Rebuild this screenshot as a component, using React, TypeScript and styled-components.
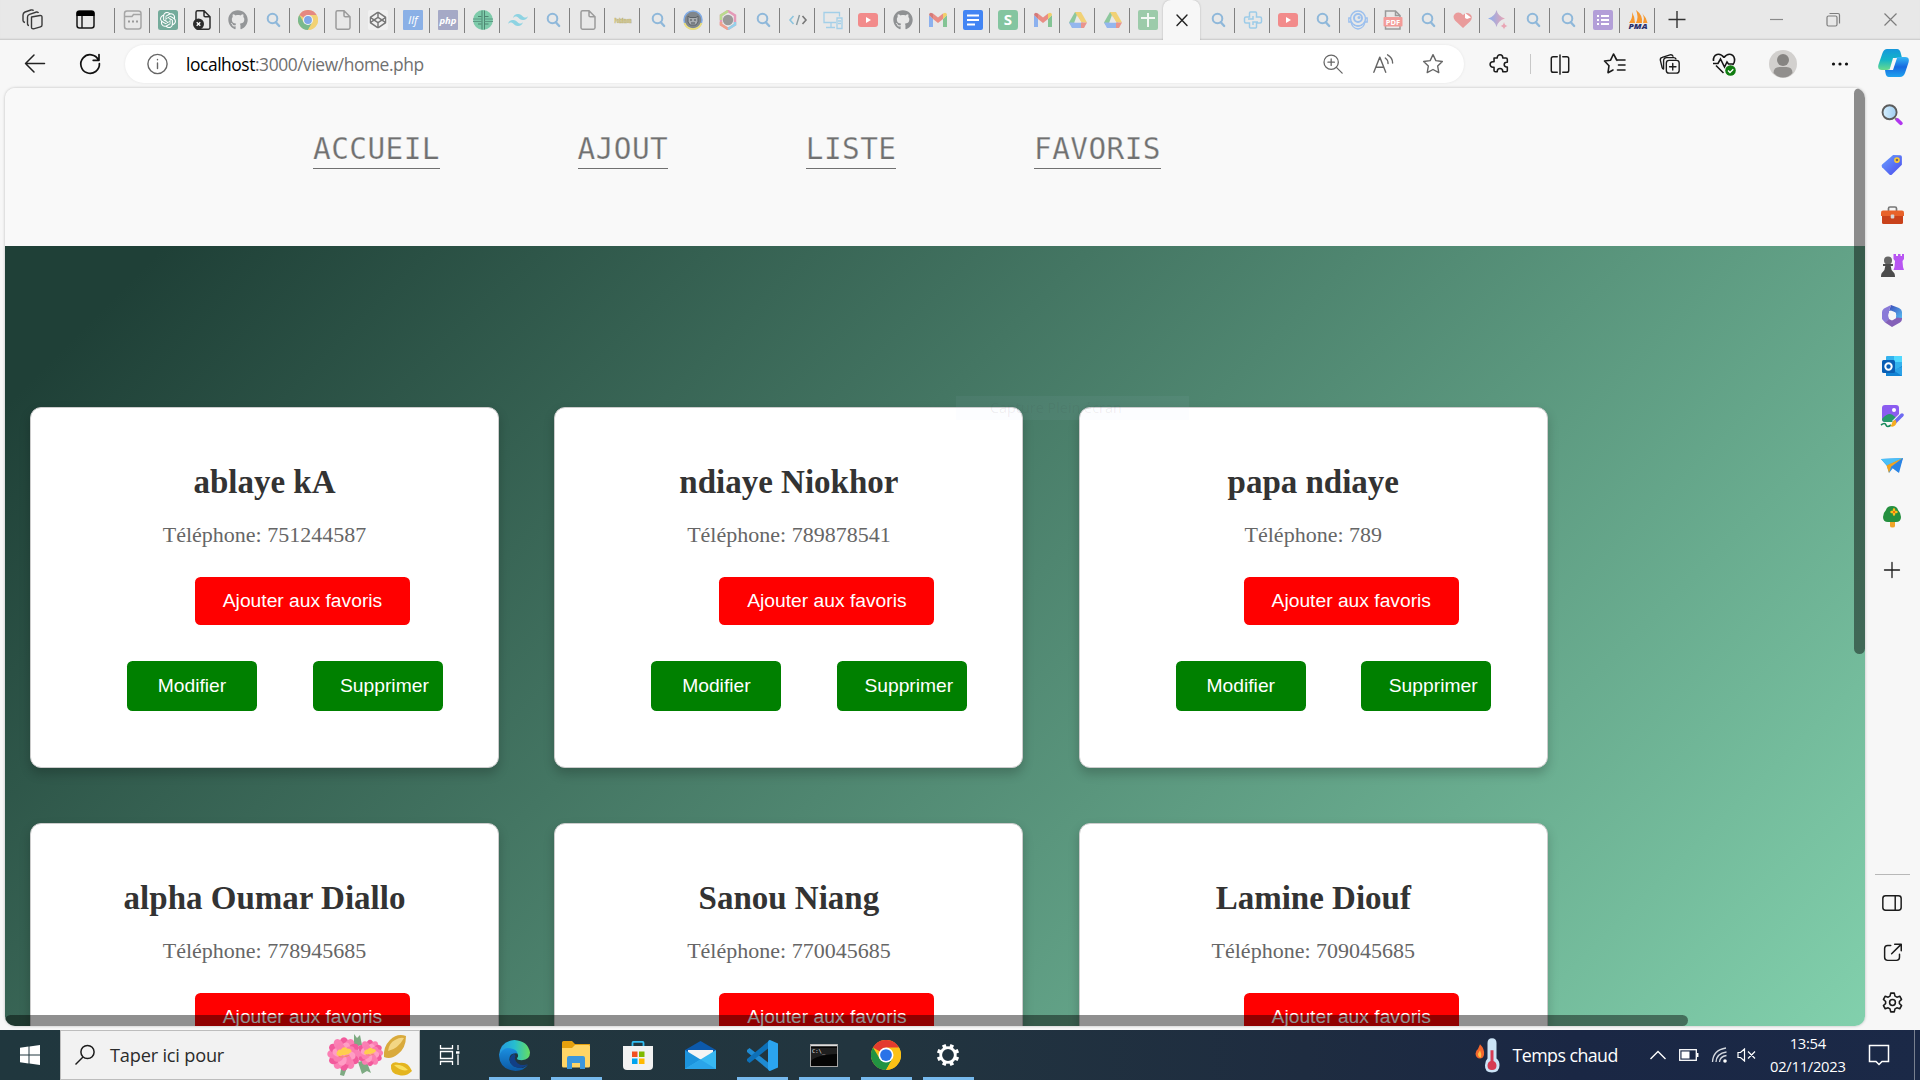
import React from "react";
import styled, { createGlobalStyle } from "styled-components";
import { FaGithub, FaCodepen } from "react-icons/fa";
import { SiOpenai, SiTailwindcss } from "react-icons/si";

const UI_FONT = '"Open Sans", "Noto Sans", sans-serif';

const Global = createGlobalStyle`
  *, *::before, *::after { box-sizing: border-box; }
  html, body { margin: 0; padding: 0; overflow: hidden; }
  body { background: #f7f7f7; font-family: ${UI_FONT}; }
`;

/* ---------- window shell ---------- */

const Screen = styled.div`
  display: flex;
  flex-direction: column;
  width: 1920px;
  height: 1080px;
  overflow: hidden;
  background: #f7f7f7;
`;

const TabStrip = styled.header`
  display: flex;
  flex: none;
  height: 40px;
  background: #e8e8e8;
  box-shadow: inset 0 -1px 0 #cfcfcf, inset 0 -2px 1px #dedede;
`;

const StripTools = styled.div`
  display: flex;
  width: 114px;
  padding: 9px 0 0 22px;
  gap: 32px;
  svg { display: block; flex: none; }
`;

const TabItem = styled.div<{ $sep: boolean }>`
  display: flex;
  flex: none;
  width: 35px;
  height: 40px;
  padding: 10px 0 0 9px;
  background: linear-gradient(#808080, #808080) 0 8px / ${(p) => (p.$sep ? "1px" : "0")} 25px no-repeat;
  svg { display: block; }
`;

const ActiveTab = styled.div`
  display: flex;
  flex: none;
  align-items: center;
  justify-content: center;
  width: 37px;
  margin: 0 -1px;
  height: 40px;
  background: #f7f7f7;
  border-radius: 8px 8px 0 0;
  box-shadow: 0 0 2px rgba(0, 0, 0, 0.25);
  clip-path: inset(0 -3px 0 -3px);
`;

const NewTab = styled.div`
  display: flex;
  width: 100px;
  padding: 10px 0 0 13px;
  background: linear-gradient(#808080, #808080) 0 8px / 1px 25px no-repeat;
`;

const WindowControls = styled.div`
  display: flex;
  gap: 37px;
  padding: 9px 0 0 12px;
  svg { display: block; }
`;

const Toolbar = styled.div`
  display: flex;
  flex: none;
  align-items: center;
  height: 48px;
  padding-left: 23px;
`;

const NavButtons = styled.div`
  display: flex;
  width: 102px;
  gap: 31px;
`;

const AddressBar = styled.div`
  display: flex;
  align-items: center;
  width: 1339px;
  height: 38px;
  padding: 0 20px 1px 20px;
  border-radius: 19px;
  background: #fff;
  box-shadow: 0 0 3px rgba(0, 0, 0, 0.08);
`;

const Url = styled.div`
  margin-left: 17px;
  flex: 1;
  font-size: 17.4px;
  line-height: 24px;
  letter-spacing: -0.43px;
  color: #707070;
  white-space: nowrap;
  b { font-weight: 400; color: #000; }
`;

const AddressActions = styled.div`
  display: flex;
  gap: 28px;
`;

const ToolbarActions = styled.div`
  display: flex;
  align-items: center;
  margin-left: 25px;
`;

const Slot = styled.div<{ $w: number }>`
  display: flex;
  justify-content: center;
  width: ${(p) => p.$w}px;
`;

const CopilotSlot = styled(Slot)`
  padding-top: 2px;
`;

const ToolDivider = styled.div`
  width: 1px;
  height: 20px;
  background: #c8c8c8;
`;

/* ---------- body ---------- */

const Middle = styled.div`
  display: flex;
  flex: none;
  height: 942px;
`;

const Viewport = styled.main`
  position: relative;
  flex: none;
  width: 1860px;
  height: 938px;
  margin-left: 5px;
  border-radius: 10px;
  overflow: hidden;
  background: #f9f9f9;
  box-shadow: 0 0 3px rgba(0, 0, 0, 0.25);
`;

const SiteNav = styled.nav`
  display: flex;
  gap: 137.5px;
  height: 158px;
  padding: 45px 0 0 308px;
  background: #f9f9f9;
`;

const NavLink = styled.a`
  display: block;
  height: 36px;
  border-bottom: 1.4px solid #707070;
  font-family: "DejaVu Sans Mono", monospace;
  font-size: 29.4px;
  line-height: 33px;
  letter-spacing: 0.45px;
  color: #707070;
  -webkit-text-stroke: 0.25px #f9f9f9;
`;

const Content = styled.section`
  display: grid;
  grid-template-columns: repeat(3, 469px);
  grid-auto-rows: 361px;
  gap: 55px 55.4px;
  height: 780px;
  padding: 161px 0 0 25px;
  background: linear-gradient(135deg, #1f4037 112px, #99f2c8 2278px);
  overflow: hidden;
`;

const Card = styled.article`
  display: flex;
  flex-direction: column;
  padding-top: 54.5px;
  border: 1.4px solid #ccc;
  border-radius: 11px;
  background: #fff;
  box-shadow: 0 5.5px 11px rgba(0, 0, 0, 0.2);
  text-align: center;
  font-family: "Liberation Serif", serif;
`;

const Name = styled.h2`
  margin: 0 0 21px;
  font-size: 33px;
  line-height: 38px;
  color: #333;
`;

const Phone = styled.p`
  margin: 0 0 30px;
  font-size: 22px;
  line-height: 25px;
  color: #666;
`;

const CardButton = styled.button<{ $kind: "fav" | "act"; $clip?: boolean }>`
  flex: none;
  width: ${(p) => (p.$kind === "fav" ? 215 : 130)}px;
  height: ${(p) => (p.$kind === "fav" ? 48 : 50)}px;
  margin: 0;
  padding: ${(p) => (p.$kind === "fav" ? "1px" : "0")} 0 0 ${(p) => (p.$clip ? "27.5px" : "0")};
  border: 0;
  border-radius: 5.5px;
  background: ${(p) => (p.$kind === "fav" ? "#f00" : "#008000")};
  color: #fff;
  font-family: "Liberation Sans", Arial, sans-serif;
  font-size: 19.25px;
  text-align: ${(p) => (p.$clip ? "left" : "center")};
  white-space: nowrap;
`;

const FavRow = styled.div`
  display: flex;
  padding-left: 164px;
  margin-bottom: 36px;
`;

const ActRow = styled.div`
  display: flex;
  gap: 55.5px;
  padding-left: 96px;
`;

const Scroll = styled.div<{ $dir: "v" | "h" }>`
  position: absolute;
  background: rgba(0, 0, 0, 0.44);
  ${(p) =>
    p.$dir === "v"
      ? "right: 0; top: 0; width: 11px; height: 566px; border-radius: 6px;"
      : "left: 0; bottom: 0; width: 1683px; height: 11px; border-radius: 6px;"}
`;

const GhostTip = styled.div`
  position: absolute;
  left: 951px;
  top: 308px;
  width: 233px;
  height: 24px;
  padding-left: 34px;
  background: rgba(190, 215, 255, 0.05);
  color: rgba(60, 60, 60, 0.08);
  font-size: 14.4px;
  line-height: 24px;
`;

const SideBar = styled.aside`
  display: flex;
  flex-direction: column;
  align-items: center;
  width: 54px;
  padding-top: 1.5px;
`;

const SideItem = styled.div<{ $h?: number }>`
  display: flex;
  flex: none;
  align-items: center;
  justify-content: center;
  width: 54px;
  height: ${(p) => p.$h ?? 50.2}px;
`;

const SideSpacer = styled.div`
  flex: 1;
`;

const SideRule = styled.div`
  width: 35px;
  height: 1px;
  margin-bottom: 3px;
  background: #b8b8b8;
`;

const SideFoot = styled.div`
  padding-bottom: 2.5px;
`;

/* ---------- taskbar ---------- */

const TaskBar = styled.footer`
  display: flex;
  flex: none;
  height: 50px;
  background: linear-gradient(90deg, #20373e 0, #22353f 45%, #1e2c40 68%, #1a2744 82%, #1b2947 100%);
  color: #fff;
`;

const StartButton = styled.div`
  display: flex;
  align-items: center;
  justify-content: center;
  width: 60px;
`;

const SearchBox = styled.div`
  display: flex;
  align-items: center;
  width: 360px;
  padding-left: 13px;
  padding-right: 5px;
  background: #f2f2f2;
  border: 1px solid #bdbdbd;
  color: #2b2b2b;
  font-size: 18.2px;
  letter-spacing: -0.2px;
  span { flex: 1; margin-left: 14px; }
  svg { display: block; }
`;

const TaskItem = styled.div<{ $open?: boolean; $first?: boolean }>`
  display: flex;
  align-items: center;
  justify-content: center;
  width: ${(p) => (p.$first ? 63 : 62)}px;
  padding-right: ${(p) => (p.$first ? 3 : 0)}px;
  background: linear-gradient(#76b9ed, #76b9ed) 50% 100% / ${(p) => (p.$open ? "51px" : "0")} 3px no-repeat;
`;

const Tray = styled.div`
  display: flex;
  align-items: center;
  margin-left: auto;
`;

const Weather = styled.div`
  width: 105px;
  margin: 0 29px 0 13px;
  font-size: 17.8px;
  letter-spacing: -0.55px;
  white-space: nowrap;
`;

const Clock = styled.div`
  width: 82px;
  margin: 0 18.7px 0 5.3px;
  text-align: center;
  font-size: 14.8px;
  line-height: 23px;
  letter-spacing: -0.3px;
  padding-bottom: 1px;
`;

const ShowDesktop = styled.div`
  width: 6px;
  height: 50px;
  margin-left: 24.5px;
  border-left: 1px solid #78808f;
`;

/* ---------- icons ---------- */

type G = { w?: number; h?: number; vb?: string; o?: number; children: React.ReactNode };
const Pic = ({ w = 20, h = w, vb = "0 0 20 20", o = 1, children }: G) => (
  <svg width={w} height={h} viewBox={vb} opacity={o} fill="none" preserveAspectRatio="none">
    {children}
  </svg>
);

const Line = ({ w = 24, c = "#1b1b1b", s = 1.4, children }: { w?: number; c?: string; s?: number; children: React.ReactNode }) => (
  <svg width={w} height={w} viewBox="0 0 24 24" fill="none" stroke={c} strokeWidth={s} strokeLinecap="round" strokeLinejoin="round">
    {children}
  </svg>
);

const TabSearch = () => (
  <Pic>
    <circle cx="9.500" cy="8.500" r="4.800" stroke="#8fb8da" strokeWidth="2" />
    <path d="M12.800 12.200l3.400 3.800" stroke="#8fb8da" strokeWidth="2.300" strokeLinecap="round" />
  </Pic>
);
const TabFile = ({ dark }: { dark?: boolean }) => (
  <Pic>
    <path d="M3 2.200A1.500 1.500 0 014.500 .8H11l6 6v11a1.500 1.500 0 01-1.500 1.400h-11A1.500 1.500 0 013 17.800zM11 .8v4.700q0 1.300 1.300 1.300H17" stroke={dark ? "#2c2c2c" : "#9b9b9b"} strokeWidth="1.500" />
    {dark && (
      <>
        <circle cx="5.500" cy="14" r="5.500" fill="#2c2c2c" />
        <path d="M3.700 12.200l3.600 3.600m0-3.600l-3.600 3.600" stroke="#fff" strokeWidth="1.300" />
      </>
    )}
  </Pic>
);
const Chrome = ({ w = 20, o = 1 }: { w?: number; o?: number }) => (
  <Pic w={w} vb="0 0 24 24" o={o}>
    <circle cx="12" cy="12" r="12" fill="#fbc116" />
    <path d="M12 12L1.600 6a12 12 0 0120.800 0z" fill="#e33b2e" />
    <path d="M1.600 6a12 12 0 0010.400 18l5.200-9L12 12 7 15z" fill="#229342" />
    <path d="M12 6h10.400A12 12 0 0112 24l5.200-9z" fill="#fbc116" />
    <circle cx="12" cy="12" r="6" fill="#fff" />
    <circle cx="12" cy="12" r="4.700" fill="#2a73e8" />
  </Pic>
);
const YouTube = () => (
  <Pic>
    <rect x="0" y="3" width="20" height="14" rx="3" fill="#f28b8b" />
    <path d="M8 7l5 3-5 3z" fill="#fff" />
  </Pic>
);
const Gmail = () => (
  <Pic o={0.55}>
    <path d="M1 5v12h4V9z" fill="#4285f4" />
    <path d="M19 5v12h-4V9z" fill="#34a853" />
    <path d="M1 5l4 4V3.500L2.800 2.800Q1 3 1 5z" fill="#c5221f" />
    <path d="M5 3.500l5 4 5-4V9l-5 4-5-4z" fill="#ea4335" />
    <path d="M15 3.500l2.200-.7Q19 3 19 5l-4 4z" fill="#fbbc04" />
  </Pic>
);
const Drive = () => (
  <Pic o={0.5}>
    <path d="M7 2h3L4.500 17.500 1 12.500z" fill="#34a853" />
    <path d="M7 2h6l6 10.500h-6z" fill="#fbbc04" />
    <path d="M1 12.500h14l-2 5.500H4z" fill="#4285f4" />
    <path d="M13 12.500h6L16 18h-3z" fill="#ea4335" />
    <path d="M10 7l-3.500 5.500h7z" fill="#e8e8e8" />
  </Pic>
);
const Tile = ({ bg, fg = "#fff", text, italic }: { bg: string; fg?: string; text: string; italic?: boolean }) => (
  <Pic>
    <rect width="20" height="20" rx={text === "S" ? 3 : 1} fill={bg} />
    <text x="10" y={text === "S" ? 15.300 : 13.600} textAnchor="middle" fill={fg} fontFamily="Open Sans, sans-serif" fontWeight={text === "llf" ? 400 : 700} fontStyle={italic ? "italic" : "normal"} fontSize={text === "S" ? 15 : text === "llf" ? 11.500 : 9.500}>
      {text}
    </text>
  </Pic>
);

const TABS: React.ReactNode[] = [
  <Pic><rect x="1.500" y="1" width="16.500" height="18" rx="2.500" stroke="#a5a5a5" strokeWidth="1.500" /><path d="M2 6.500h7l1.500-2H18" stroke="#a5a5a5" strokeWidth="1.500" /><path d="M5 11.500h2m2 0h2m2 0h2" stroke="#999" strokeWidth="2" /></Pic>,
  <Pic><rect width="20" height="20" rx="2.500" fill="#74ab9b" /><g transform="translate(2 2)"><SiOpenai size={16} color="#fff" /></g></Pic>,
  <TabFile dark />,
  <FaGithub size={20} color="#949698" />,
  <TabSearch />,
  <Chrome o={0.55} />,
  <TabFile />,
  <Pic><rect width="20" height="20" rx="2" fill="#f1f1f1" /><g transform="translate(1.500 1.500)"><FaCodepen size={17} color="#777" /></g></Pic>,
  <Tile bg="#8ab0e6" text="llf" italic />,
  <Tile bg="#a5a9c6" text="php" italic />,
  <Pic><circle cx="10" cy="10" r="9.900" fill="#7dcbaa" /><path d="M9 .5v19M11.500 .5v19" stroke="#4d8571" strokeWidth="1" /><path d="M0 9h9M0 11.500h9M11.500 9H20M11.500 11.500H20" stroke="#5d9a84" strokeWidth="1" /><path d="M5 6.500h3.500M5 14h3.500M12 6.500h3.500M12 14h3.500" stroke="#4d8571" strokeWidth="1.200" /></Pic>,
  <SiTailwindcss size={20} color="#8dd3e2" />,
  <TabSearch />,
  <TabFile />,
  <Pic><text x="1.500" y="12.500" textLength="17" lengthAdjust="spacingAndGlyphs" fill="#ddd28e" stroke="#b3a86f" strokeWidth=".5" fontFamily="Open Sans, sans-serif" fontWeight="800" fontSize="7.500">Pokémon</text></Pic>,
  <TabSearch />,
  <Pic><circle cx="10" cy="10" r="9" fill="#80868c" stroke="#80abe5" strokeWidth="1.500" /><path d="M1.500 13a9 9 0 0017 0" stroke="#efdf77" strokeWidth="1.800" /><path d="M5 6l2 1.500h6L15 6v6l-2 3H7l-2-3z" fill="#a9adb1" stroke="#5c6268" /><path d="M7 10h2m2 0h2M8 13h4" stroke="#4d5358" /></Pic>,
  <Pic><path d="M10 1l7 4.500v9L10 19l-7-4.500v-9z" stroke="#e49ab8" strokeWidth="2.500" /><path d="M3 10V5.500L10 1" stroke="#b9dc8d" strokeWidth="2.500" /><path d="M3 12v2.500L10 19" stroke="#f0a18c" strokeWidth="2.500" /><path d="M10 19l7-4.500V12" stroke="#92d1ea" strokeWidth="2.500" /><circle cx="10" cy="10" r="5.200" fill="#999" /></Pic>,
  <TabSearch />,
  <Pic><path d="M5.500 6L2 10l3.500 4" stroke="#8cc5df" strokeWidth="1.600" /><path d="M14.500 6l3.500 4-3.500 4" stroke="#777" strokeWidth="1.600" /><path d="M11.500 5l-3 10" stroke="#8a9a9f" strokeWidth="1.400" /></Pic>,
  <Pic><path d="M13 12.500H1V2.500h15.500v4M8 13v4M3 17.500h9M14 8h5v10.500h-5zM15 11h3m-3 2.500h3" stroke="#a3cfe8" strokeWidth="1.300" /></Pic>,
  <YouTube />,
  <FaGithub size={20} color="#8f9193" />,
  <Gmail />,
  <Pic><rect width="20" height="20" rx="2" fill="#4285f4" /><path d="M4 5.500h12M4 10h12M4 14.500h8" stroke="#fff" strokeWidth="2" /></Pic>,
  <Tile bg="#84c5a0" text="S" />,
  <Gmail />,
  <Drive />,
  <Drive />,
  <Pic><rect width="20" height="20" rx="2" fill="#9ccbaa" /><path d="M10 3v14M3 8h14" stroke="#f3f8f4" strokeWidth="2" /></Pic>,
  null,
  <TabSearch />,
  <Pic><path d="M7.500 2h5q1 0 1 1v4H17q1.500 0 1.500 1.500v3Q18.500 13 17 13h-3.500v4q0 1-1 1h-5q-1 0-1-1v-4H3q-1.500 0-1.500-1.500v-3Q1.500 7 3 7h3.500V3q0-1 1-1zM10 6v3H5m5 6v-3h5" stroke="#9ccbe8" strokeWidth="1.500" /></Pic>,
  <YouTube />,
  <TabSearch />,
  <Pic><circle cx="10" cy="8.500" r="7.500" stroke="#9cc0ee" strokeWidth="1.500" /><circle cx="10" cy="8" r="4" stroke="#9cc0ee" strokeWidth="2" /><circle cx="11" cy="7.500" r="1.500" fill="#9cc0ee" /><path d="M2 8H.8v4H3q1 6 7 7 6-1 7-7h2.200V8H18M6 15q4 2 8 0" stroke="#9cc0ee" strokeWidth="1.300" /></Pic>,
  <Pic><path d="M2.500 8V1h10L17 5.500V8M2.500 16v3H17v-3M12.500 1v4.500H17" stroke="#999" strokeWidth="1.500" /><rect x=".5" y="7" width="19" height="9.500" rx="1" fill="#f39b98" /><text x="10" y="14.500" textAnchor="middle" fontFamily="Open Sans, sans-serif" fontWeight="700" fontSize="7.500" fill="#fff">PDF</text></Pic>,
  <TabSearch />,
  <Pic><path d="M10 18L2 10.500Q-1 6.500 2 3.800q4-3 8 1.200 4-4 8 0 2 3-1 6.500z" fill="#e99b9b" /><path d="M12 3l6 4.500-4 1.500-2-1z" fill="#fff" /></Pic>,
  <Pic><defs><linearGradient id="spk"><stop stopColor="#86aff0" /><stop offset="1" stopColor="#eba4b2" /></linearGradient></defs><path d="M8.500 0q1.500 6.500 8.500 8.500-7 2-8.500 8.500Q7 10.500 0 8.500 7 6.500 8.500 0z" fill="url(#spk)" /><path d="M16 12q.5 3.500 3.500 4-3 .5-3.500 3.500-.5-3-3.500-3.500 3-.5 3.500-4z" fill="#e9a5b4" /></Pic>,
  <TabSearch />,
  <TabSearch />,
  <Pic><rect width="20" height="20" rx="2" fill="#b39fd8" /><path d="M4 6h2m-2 4h2m-2 4h2M8 6h8m-8 4h8m-8 4h8" stroke="#fff" strokeWidth="2" /></Pic>,
  <Pic><path d="M4 2Q5 8 1 13h6Q7 7 4 2zM8 0q3 7 0 13h6Q15 5 8 0zM14 3q3 4 1 10h4.500Q18 7 14 3z" fill="#f7982e" /><text x="0.500" y="19.300" textLength="19" lengthAdjust="spacingAndGlyphs" fontFamily="Open Sans, sans-serif" fontWeight="800" fontStyle="italic" fontSize="7.500" fill="#28306e">PMA</text></Pic>,
];

const Copilot = () => (
  <Pic w={31} h={28} vb="0 0 31 28">
    <defs>
      <linearGradient id="cpa" x1="0" y1="0" x2="0" y2="1"><stop stopColor="#1597dc" /><stop offset=".5" stopColor="#13b4c8" /><stop offset="1" stopColor="#6adb8c" /></linearGradient>
      <linearGradient id="cpb" x1="0" y1="0" x2="0" y2="1"><stop stopColor="#35b8f5" /><stop offset=".5" stopColor="#1769e0" /><stop offset="1" stopColor="#1fa3ee" /></linearGradient>
    </defs>
    <path d="M9 0h10q3 0 4 5l1 4h-6q-2 0-3 3l-2 6q-1 3-4 3H4q-5 0-3.500-5.500L4.500 4Q6 0 9 0z" fill="url(#cpa)" />
    <path d="M22 28H11q-3 0-3.500-4L7 21h4q2 0 3-3l2-7q1-3 4-3h7q5 0 3.500 5.500L27 24q-1.500 4-5 4z" fill="url(#cpb)" />
    <path d="M15 9h4l-4 12h-3.500z" fill="#f7f7f7" />
  </Pic>
);

const SIDE_ICONS: React.ReactNode[] = [
  <Pic w={22}><defs><linearGradient id="mg"><stop stopColor="#d7f0ff" /><stop offset="1" stopColor="#9fcdf0" /></linearGradient></defs><path d="M13 13l2 2" stroke="#777" strokeWidth="2" /><path d="M15 14.500l3 3" stroke="#b136ef" strokeWidth="3.400" strokeLinecap="round" /><circle cx="7.800" cy="7.500" r="6.400" fill="url(#mg)" stroke="#5c5c5c" strokeWidth="1.700" /></Pic>,
  <Pic w={22}><defs><linearGradient id="tg" x2="1" y2="1"><stop stopColor="#6aa2ff" /><stop offset="1" stopColor="#4b49ec" /></linearGradient></defs><path d="M11 .8l6.500.4q1.500.1 1.500 1.600v7L10 18.700q-1.200 1-2.400 0L1 12q-1-1.200 0-2.400z" fill="url(#tg)" /><circle cx="14.500" cy="5.500" r="1.900" fill="#7a6a66" stroke="#ffcd2e" strokeWidth="1.400" /></Pic>,
  <Pic w={23} h={18} vb="0 0 23 18"><path d="M7.500 5V2.500Q7.500 1 9 1h5q1.500 0 1.500 1.500V5" stroke="#777" strokeWidth="1.700" /><rect x="1" y="5" width="21" height="13" rx="1.500" fill="#c9421b" /><path d="M0 6.500Q0 4.500 2 4.500h19q2 0 2 2V10H0z" fill="#e8622a" /><rect x="9.700" y="8.500" width="3.600" height="4" rx="1" fill="#d5d5d5" /></Pic>,
  <Pic w={24} h={23} vb="0 0 24 23"><path d="M13.500 0H16v2h2V0h2.500v2H22V0h2v5l-1.500 2 .5 6 1 3H13.500l1-3 .5-6-1.500-2z" fill="#b855f2" /><circle cx="8" cy="6.500" r="4" fill="#666" /><path d="M3 10h10v2h-2.300q.3 4 2.500 6 1.800 1 1.800 5H1q0-4 1.800-5 2.200-2 2.500-6H3z" fill="#4c4c4c" /></Pic>,
  <Pic w={22} h={23} vb="0 0 22 23"><defs><linearGradient id="m3" x2="1" y2="1"><stop stopColor="#3b49b8" /><stop offset="1" stopColor="#57bdf3" /></linearGradient></defs><path d="M10 1l8 3q3 1.500 3 4v7l-6-1V9l-5-2.500L8 7z" fill="url(#m3)" /><path d="M10 1L3 4.500Q1 6 1 8v7l3 3.500 4-3V7z" fill="#8a7ad8" /><path d="M21 14v1q0 2-2 3.500L11 23l-7-4.500 4-3.500 3 1.500 5-3z" fill="#8460b8" /><circle cx="11.200" cy="11.500" r="4" fill="#f7f7f7" /></Pic>,
  <Pic w={22} h={22} vb="0 0 22 22"><rect x="5" y="1" width="16" height="20" rx="1" fill="#33b2ee" /><path d="M13 1h8v6h-8z" fill="#50d9ff" /><path d="M5 11l8 5 8-5v10H5z" fill="#1383d4" /><path d="M21 12v9L12 15z" fill="#2ba2e8" /><rect x="1" y="5" width="13" height="13" rx="1.500" fill="#0a5fb5" /><circle cx="7.500" cy="11.500" r="3.200" stroke="#fff" strokeWidth="2" /></Pic>,
  <Pic w={24} h={24} vb="0 0 24 24"><rect x="2" y="1" width="17" height="17" rx="3" fill="#8b5cf0" /><path d="M2 15q7-8 12-3l5 4q-1 2-3 2H5q-3 0-3-3z" fill="#279b6b" /><circle cx="14" cy="6" r="2" fill="#fff" /><path d="M1 21q4-3 5 0t5 0" stroke="#17895b" strokeWidth="1.700" /><path d="M22 11l-8 8" stroke="#f7f7f7" strokeWidth="5.500" /><path d="M22 11l-7 7" stroke="#6e6af2" strokeWidth="3.500" strokeLinecap="round" /><path d="M15.500 16q2 3-.5 5.500-2 2-5 .5 2-1 2-3 1-3 3.500-3z" fill="#f5ad21" /></Pic>,
  <Pic w={23} h={18} vb="0 0 23 18"><path d="M0 2L22 1 17 15l-5-4-4 5-2-7z" fill="#2f93ea" /><path d="M0 2L22 1 6 8.500z" fill="#4cc0f7" /><path d="M22 1L5.500 8.500 8 16l2-6z" fill="#f0a321" /><path d="M22 1L10 10l8 6z" fill="#2b84e4" /></Pic>,
  <Pic w={20} h={23} vb="0 0 20 23"><path d="M8 15h5v6q0 1.500-2.500 1.500T8 21z" fill="#f0a428" /><path d="M10 1q5 0 6 4 3 3 3 7 0 5-5 5H6q-5 0-5-5 0-4 3-7 1-4 6-4z" fill="#25903f" /><path d="M12 4.500v5M9.500 7h5" stroke="#ffbe1a" strokeWidth="2.400" strokeLinecap="round" /><circle cx="12" cy="7" r="1" fill="#e8590c" /></Pic>,
  <Line s={1.300}><path d="M12 4.500v15M4.500 12h15" /></Line>,
];

const gearPath = "M10.300 2h3.400l.7 2.900 1.800 1 2.800-.9 1.700 3-2.100 2v2l2.100 2-1.700 3-2.800-.9-1.800 1-.7 2.900h-3.400l-.7-2.900-1.800-1-2.800.9-1.700-3 2.100-2v-2l-2.100-2L5 5l2.800.9 1.800-1z";

/* ---------- data ---------- */

const CONTACTS = [
  { name: "ablaye kA", phone: "751244587", actions: true },
  { name: "ndiaye Niokhor", phone: "789878541", actions: true },
  { name: "papa ndiaye", phone: "789", actions: true },
  { name: "alpha Oumar Diallo", phone: "778945685", actions: false },
  { name: "Sanou Niang", phone: "770045685", actions: false },
  { name: "Lamine Diouf", phone: "709045685", actions: false },
];

const Flower = ({ x, y, s }: { x: number; y: number; s: number }) => (
  <g transform={`translate(${x} ${y}) scale(${s})`}>
    {[0, 30, 60, 90, 120, 150, 180, 210, 240, 270, 300, 330].map((a) => (
      <ellipse key={a} cx="0" cy="-10" rx="4.200" ry="5.500" fill={a % 60 ? "#fb7fb4" : "#f25a9c"} transform={`rotate(${a})`} />
    ))}
    {[15, 60, 105, 150, 195, 240, 285, 330].map((a) => (
      <ellipse key={a} cx="0" cy="-6" rx="4" ry="5" fill={a % 30 ? "#ff9dc4" : "#fb7db0"} transform={`rotate(${a})`} />
    ))}
    <path d="M-7 0q1-5 4-4 3-4 6-1 4 0 4 3-4 4-8 3-5 2-6-1z" fill="#ffce4f" />
    <path d="M-5 2q5 2 10-1" stroke="#f58a6a" fill="none" />
  </g>
);

export default function App() {
  return (
    <Screen>
      <Global />
      <TabStrip>
        <StripTools>
          <svg width="21" height="21" viewBox="0 0 21 21" fill="none" stroke="#3a3a3a" strokeWidth="1.400" strokeLinejoin="round">
            <path d="M9.500 8l8.500-1.500q2-.2 2 1.500v8q0 1.500-1.500 1.800l-7 2q-2 .2-2-1.500zM7 16.500q-1.500 0-1.500-2V8q0-2 2-2.700l7-2.300q1.500-.3 2 1M3 13.500q-2-.5-2-2V6q0-2 2-3L9 1q2-.5 2.500.8" />
          </svg>
          <svg width="20" height="20" viewBox="0 0 19 20" fill="none">
            <rect x="1.500" y="2" width="17" height="17" rx="2.500" stroke="#161616" strokeWidth="1.500" />
            <path d="M1 7V4Q1 2 3 2h13.500q2.500 0 2.500 2v3z" fill="#000" />
            <path d="M6.500 7v12" stroke="#161616" strokeWidth="1.400" />
          </svg>
        </StripTools>
        {TABS.map((icon, i) =>
          i === 30 ? (
            <ActiveTab key={i}>
              <Line w={20} c="#222" s={1.700}><path d="M6 6l12 12.500m0-12.500l-12 12.500" /></Line>
            </ActiveTab>
          ) : (
            <TabItem key={i} $sep={i !== 31}>{icon}</TabItem>
          )
        )}
        <NewTab>
          <svg width="20" height="19" viewBox="0 0 20 19" stroke="#333" strokeWidth="1.400"><path d="M1.500 9.500h17M10 1v17" /></svg>
        </NewTab>
        <WindowControls>
          <svg width="20" height="20" viewBox="0 0 20 20" stroke="#8a8a8a" strokeWidth="1.200"><path d="M4 10.500h13" /></svg>
          <svg width="20" height="20" viewBox="0 0 20 20" stroke="#7d7d7d" strokeWidth="1.200" fill="none"><rect x="4" y="7" width="10" height="10" rx="1.500" /><path d="M6.500 4.500H15q1.500 0 1.500 1.500v8.500" /></svg>
          <svg width="20" height="20" viewBox="0 0 20 20" stroke="#7d7d7d" strokeWidth="1.200"><path d="M4.500 4.500l12 12m0-12l-12 12" /></svg>
        </WindowControls>
      </TabStrip>

      <Toolbar>
        <NavButtons>
          <Line c="#222" s={1.500}><path d="M21.500 11.500H2.500M11 3L2.500 11.500 11 20" /></Line>
          <Line c="#111" s={1.700}><path d="M20.500 8A9.300 9.300 0 1021.400 11.500M21 2.500v5.800h-5.800" /></Line>
        </NavButtons>
        <AddressBar>
          <Line c="#666" s={1.400}><circle cx="12.500" cy="12" r="9.600" /><path d="M12.500 11v5.500M12.500 7.500v.3" /></Line>
          <Url><b>localhost</b>:3000/view/home.php</Url>
          <AddressActions>
            <Line w={22} c="#666" s={1.400}><circle cx="10" cy="10" r="7.800" /><path d="M16 16l6 6M10 6.500v7M6.500 10h7" /></Line>
            <Line w={22} c="#666" s={1.500}><path d="M2 21L8.500 4.500 15 21M4.500 15.500h8M14.500 5.500q3 2 3 6M17 2q5.500 3 5.500 9" /></Line>
            <Line w={22} c="#666" s={1.500}><path d="M12 1.800l3.100 6.500 7.100 1-5.100 5 1.200 7.100L12 18l-6.300 3.400L6.900 14.300l-5.100-5 7.100-1z" /></Line>
          </AddressActions>
        </AddressBar>
        <ToolbarActions>
          <Slot $w={22}>
            <Line w={22} s={1.700}><path d="M5.500 5.500H9V5a3 3 0 016 0v.5h3.500q1.500 0 1.500 1.500v3h-.8a2.600 2.600 0 000 5.200H20V19q0 1.500-1.500 1.500H15V20a3 3 0 00-6 0v.5H7q-1.500 0-1.500-1.500v-3.500H4.200a3 3 0 010-6H5.500z" /></Line>
          </Slot>
          <Slot $w={38}><ToolDivider /></Slot>
          <Slot $w={22}><Line w={23} s={1.600}><path d="M9 3.500H4.500q-2 0-2 2v13q0 2 2 2H9M15 3.500h4.500q2 0 2 2v13q0 2-2 2H15M12 1.500v21" /></Line></Slot>
          <Slot $w={88}><Line w={24} s={1.600}><path d="M14 8.300L10.500 2 7.600 8.200 1.500 9l4.500 4.700-1 7 5-2.700M10.500 2l3 6h8.500M15.500 13H22M14.500 18H22" /></Line></Slot>
          <Slot $w={22}><Line w={24} s={1.500}><rect x="8" y="8" width="14" height="14" rx="3" /><path d="M15 11.500v7M11.500 15h7M5 17.500q-1.300-.5-1.700-2L1.500 8q-.5-2.500 2-3.200L12 2q2.500-.5 3.300 1.500M5 17.500V8.500q0-3.500 3.500-3.500H16q2 0 2.500 1.500" /></Line></Slot>
          <Slot $w={86}>
            <svg width="24" height="24" viewBox="0 0 24 24" fill="none" stroke="#161616" strokeWidth="1.600">
              <path d="M12 5.500Q9 1.500 5 2.500 1 4 1.500 9M12 5.500Q15 1.500 19 2.500 23 4 22.500 9q0 2-2 4M4 13.500l7.500 7.500M1 11.500h5L8.500 7l4 8 2.500-5 1.500 2H22" />
              <circle cx="18.500" cy="18.500" r="5.300" fill="#107c10" stroke="none" />
              <path d="M16 18.500l2 2 3.300-3.300" stroke="#fff" strokeWidth="1.300" />
            </svg>
          </Slot>
          <Slot $w={31}>
            <svg width="28" height="28" viewBox="0 0 28 28"><circle cx="14" cy="14" r="14" fill="#d2d0ce" /><circle cx="14" cy="10" r="6" fill="#868482" /><path d="M4.500 23q0-6 6-6h7q6 0 6 6-4 4.500-9.500 4.500T4.500 23z" fill="#918f8d" /></svg>
          </Slot>
          <Slot $w={84}>
            <svg width="20" height="6" viewBox="0 0 20 6" fill="#111"><circle cx="3.500" cy="3" r="1.600" /><circle cx="10" cy="3" r="1.600" /><circle cx="16.500" cy="3" r="1.600" /></svg>
          </Slot>
          <CopilotSlot $w={22}><div><Copilot /></div></CopilotSlot>
        </ToolbarActions>
      </Toolbar>

      <Middle>
        <Viewport>
          <SiteNav>
            {["ACCUEIL", "AJOUT", "LISTE", "FAVORIS"].map((t) => (
              <NavLink key={t}>{t}</NavLink>
            ))}
          </SiteNav>
          <Content>
            {CONTACTS.map((c) => (
              <Card key={c.name}>
                <Name>{c.name}</Name>
                <Phone>Téléphone: {c.phone}</Phone>
                <FavRow>
                  <CardButton $kind="fav">Ajouter aux favoris</CardButton>
                </FavRow>
                {c.actions && (
                  <ActRow>
                    <CardButton $kind="act">Modifier</CardButton>
                    <CardButton $kind="act" $clip>Supprimer</CardButton>
                  </ActRow>
                )}
              </Card>
            ))}
          </Content>
          <GhostTip>Capture Plein écran</GhostTip>
          <Scroll $dir="v" />
          <Scroll $dir="h" />
        </Viewport>
        <SideBar>
          {SIDE_ICONS.map((ic, i) => (
            <SideItem key={i} $h={i === 9 ? 57 : 50.200}>{ic}</SideItem>
          ))}
          <SideSpacer />
          <SideRule />
          <SideFoot>
            <SideItem $h={50}><Line w={22} s={1.600}><rect x="2" y="4" width="20" height="16" rx="3" /><path d="M15.500 4v16" /></Line></SideItem>
            <SideItem $h={50}><Line w={21} s={1.700}><path d="M10 4H6.500Q3 4 3 7.500v10Q3 21 6.500 21h10q3.500 0 3.500-3.500V14M14.500 2.500H22V10M21.500 3L11 13.500" /></Line></SideItem>
            <SideItem $h={50}><Line w={25} s={1.500}><g transform="translate(0 1)"><path d={gearPath} /><circle cx="12" cy="11" r="2.800" /></g></Line></SideItem>
          </SideFoot>
        </SideBar>
      </Middle>

      <TaskBar>
        <StartButton>
          <svg width="20" height="20" viewBox="0 0 20 20" fill="#fff"><path d="M0 2.800L8.500 1.600v8H0zM9.500 1.500L20 0v9.600H9.500zM0 10.500h8.500v8L0 17.300zM9.500 10.500H20V20L9.500 18.600z" /></svg>
        </StartButton>
        <SearchBox>
          <svg width="22" height="22" viewBox="0 0 22 22" fill="none" stroke="#1c1c1c" strokeWidth="1.500"><circle cx="13.500" cy="8" r="6.600" /><path d="M9 13L1.500 20.500" /></svg>
          <span>Taper ici pour</span>
          <svg width="88" height="46" viewBox="0 0 88 46">
            <path d="M28 2l3 4 3-3 2 10-8 2zM14 43l2-12 6 2-4 11zM36 42l-4-12 8-2 5 13-4-2z" fill="#7eab83" />
            <Flower x={44} y={21} s={0.850} />
            <Flower x={18} y={22} s={1.080} />
            <path d="M58 25q-1-10 6-17Q71 1 80 4q0 12-8 18-7 6-14 3z" fill="#d9aa3c" />
            <path d="M62 19q1-8 7-11 5-3 9-2-6 11-16 13z" fill="#f3d684" />
            <path d="M65 33q2-4 8-2 9-2 13 8-6 6-13 4-9-1-8-10z" fill="#e4b51f" />
            <path d="M68 33q8-1 14 5-7 2-14-5z" fill="#f9e05f" />
          </svg>
        </SearchBox>
        <TaskItem $first>
          <svg width="22" height="22" viewBox="0 0 22 22" fill="none" stroke="#fff" strokeWidth="1.300"><path d="M1.500 1v3.500h12V1M1.500 21v-3.500h12V21M1.500 7.500h12v7h-12zM19 1v5M19 10.500V21" /><path d="M17 8.500h3.500" strokeWidth="2.500" /></svg>
        </TaskItem>
        <TaskItem $open>
          <Pic w={31} vb="0 0 30 30">
            <defs>
              <linearGradient id="ed1"><stop stopColor="#2597e0" /><stop offset=".5" stopColor="#26bdd0" /><stop offset="1" stopColor="#66de60" /></linearGradient>
              <linearGradient id="ed2" x2="0" y2="1"><stop stopColor="#1b8fe0" /><stop offset="1" stopColor="#0c59a4" /></linearGradient>
            </defs>
            <path d="M0 15Q1 1 15 0q13 1 15 12 0 7-8 7.500-5 0-4.500-2 2-2 0-5Q11 7 0 15z" fill="url(#ed1)" />
            <path d="M0 15q4-9 11-7 6 1 7 5-8-1-8 6 1 8 13 8 2-.5 5-3-4 6-12 6Q1 29 0 15z" fill="url(#ed2)" />
            <path d="M14.500 13q-5 3-4 8 2 6 11 6 4-1 6.500-3.500-6 2-10-1-4-4-2-7z" fill="#123f86" />
          </Pic>
        </TaskItem>
        <TaskItem $open>
          <Pic w={28} h={28} vb="0 0 28 28"><path d="M0 1.500Q0 0 1.500 0H10l3 3h15v5H0z" fill="#e5a00d" /><path d="M0 7h10l3-3h13.500Q28 4 28 5.500V25q0 1.500-1.500 1.500h-25Q0 26.500 0 25z" fill="#ffd566" /><path d="M5 28V17q0-2 2-2h14q2 0 2 2v11h-5v-6h-8v6z" fill="#3c97dc" /></Pic>
        </TaskItem>
        <TaskItem>
          <Pic w={30} h={29} vb="0 0 30 29"><path d="M9.500 7V2q0-1.200 1.200-1.200h8.600q1.200 0 1.200 1.200v5" stroke="#32bdf2" strokeWidth="1.800" /><path d="M0 5h30v20q0 4-4 4H4q-4 0-4-4z" fill="#f2f2f2" /><path d="M9 10.500h5.500v5.500H9z" fill="#f25022" /><path d="M16 10.500h5.500v5.500H16z" fill="#7fba00" /><path d="M9 17.500h5.500V23H9z" fill="#00a4ef" /><path d="M16 17.500h5.500V23H16z" fill="#ffb900" /></Pic>
        </TaskItem>
        <TaskItem>
          <Pic w={31} h={28} vb="0 0 31 28"><path d="M0 9L15.500 0 31 9v4H0z" fill="#0c59ab" /><path d="M3 9h25v6l-12 8L3 15z" fill="#f4f4f4" /><path d="M0 9l15.500 9.500L31 28H0z" fill="#1c93dc" /><path d="M31 9L15.500 18.500 0 28h31z" fill="#38b8f2" /><path d="M15.500 18.500L31 28H0z" fill="#2aa4e9" /></Pic>
        </TaskItem>
        <TaskItem $open>
          <Pic w={31} h={31} vb="0 0 31 31"><path d="M0 10l2.500-2L23 24v7L0 12z" fill="#1f8ad2" /><path d="M0 21l2.500 2L23 7V0L0 19z" fill="#0d70b8" /><path d="M23 0l8 3.500v24L23 31q-2 0-2-3V3q0-3 2-3z" fill="#2ba4f0" /></Pic>
        </TaskItem>
        <TaskItem $open>
          <Pic w={28} h={23} vb="0 0 28 23"><rect x=".5" y=".5" width="27" height="22" fill="#050505" stroke="#a5a5a5" /><path d="M1 1.500h26" stroke="#ddd" strokeWidth="1.500" /><path d="M1 17Q6 11 27 10V4H1z" fill="#3a3a3a" opacity=".5" /><text x="2" y="9" fontSize="5.500" fill="#eee" fontFamily="DejaVu Sans Mono, monospace">C:\_</text></Pic>
        </TaskItem>
        <TaskItem $open><Chrome w={30} /></TaskItem>
        <TaskItem $open>
          <svg width="24" height="24" viewBox="0 0 24 24" fill="none" stroke="#fff">
            <circle cx="12" cy="12" r="7.300" strokeWidth="2.800" />
            <g strokeWidth="3.800">
              {[0, 45, 90, 135, 180, 225, 270, 315].map((a) => (
                <path key={a} d="M12 .8v3.500" transform={`rotate(${a + 22.500} 12 12)`} />
              ))}
            </g>
          </svg>
        </TaskItem>
        <Tray>
          <svg width="25" height="36" viewBox="0 0 25 30" preserveAspectRatio="none">
            <path d="M5 6q5 4 4 9-1 3-4 3-4 0-4.500-4Q1 11 3 10q1-2 2-4z" fill="#f3672d" /><path d="M5 11q2 3 1 6-3 0-3-3z" fill="#ffc043" />
            <path d="M12.500 5Q12.500 1 17 1t4.500 4v13q3 2 3 5.500 0 6-7.500 6t-7-6Q10 20 12.500 18z" fill="#cce4f6" />
            <path d="M15.500 11h3v9q3 1 3 4 0 3.500-4.500 3.500T12.500 24q0-3 3-4z" fill="#d63b52" />
          </svg>
          <Weather>Temps chaud</Weather>
          <Slot $w={22}><svg width="18" height="10" viewBox="0 0 18 10" fill="none" stroke="#fff" strokeWidth="1.400"><path d="M1.500 9L9 1.500 16.500 9" /></svg></Slot>
          <Slot $w={40}><svg width="20" height="12" viewBox="0 0 20 12" fill="none"><rect x=".7" y=".7" width="16.600" height="10.600" stroke="#fff" strokeWidth="1.300" /><path d="M2.500 2.500h8v7h-8z" fill="#fff" /><path d="M18.700 4v4" stroke="#fff" strokeWidth="1.500" /></svg></Slot>
          <Slot $w={22}>
            <svg width="18" height="18" viewBox="0 0 18 18" fill="none" strokeWidth="1.300"><path d="M1.500 16Q2 4 15 2M5 16q.5-8.500 10.500-10M8.500 16q.3-5.500 7-6.500" stroke="#d4d8e0" /><circle cx="14" cy="15" r="1.800" fill="#fff" /></svg>
          </Slot>
          <Slot $w={31}>
            <svg width="19" height="14" viewBox="0 0 19 14" fill="none" stroke="#fff" strokeWidth="1.200"><path d="M1 4.500h2.500L7.500 1v12L3.500 9.500H1zM11 3.500l7 7m0-7l-7 7" /></svg>
          </Slot>
          <Clock>13:54<br />02/11/2023</Clock>
          <svg width="22" height="22" viewBox="0 0 22 22" fill="none" stroke="#fff" strokeWidth="1.500"><path d="M1.500 1.500h19v16H14l-3 3-3-3H1.500z" /></svg>
          <ShowDesktop />
        </Tray>
      </TaskBar>
    </Screen>
  );
}
